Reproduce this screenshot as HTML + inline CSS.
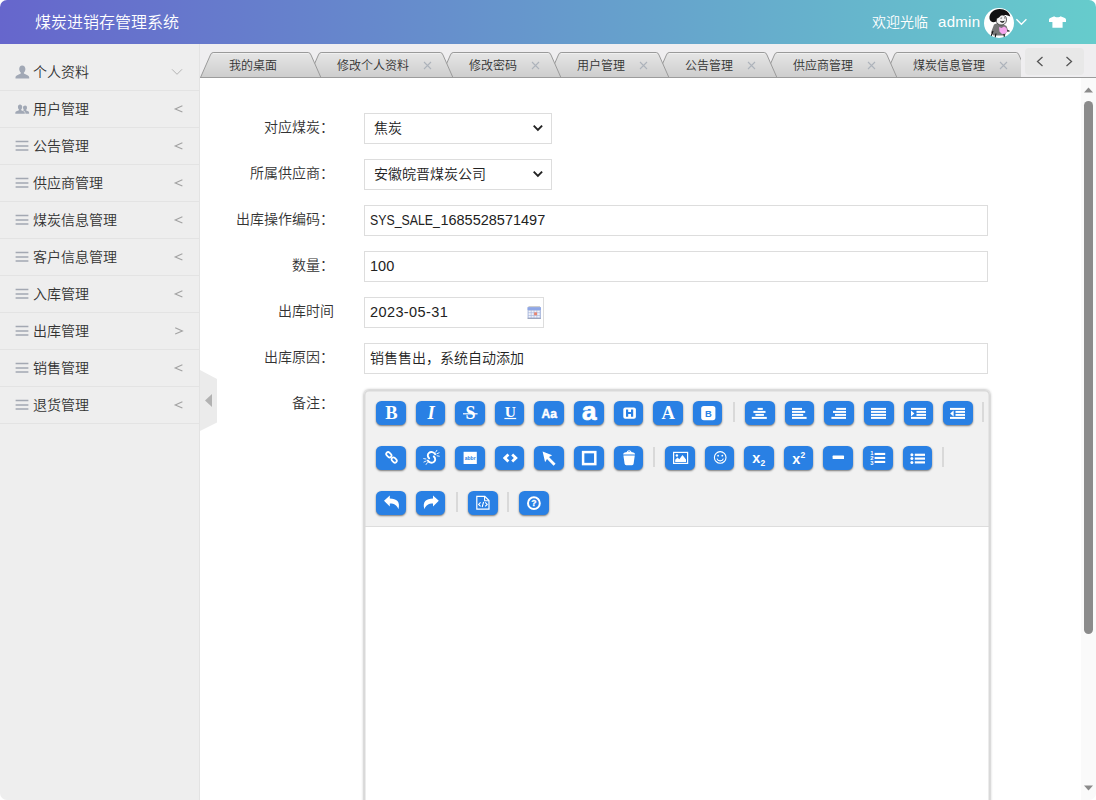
<!DOCTYPE html>
<html lang="zh-CN">
<head>
<meta charset="utf-8">
<title>煤炭进销存管理系统</title>
<style>
*{box-sizing:border-box;margin:0;padding:0}
html,body{width:1096px;height:800px;overflow:hidden;background:#fff}
body{font-family:"Liberation Sans","Noto Sans CJK SC",sans-serif;font-size:14px;font-weight:350;color:#333;position:relative}
#win{position:absolute;left:0;top:0;width:1096px;height:800px;border-radius:7px;overflow:hidden;background:#fff}
/* header */
#hd{position:absolute;left:0;top:0;width:1096px;height:44px;background:linear-gradient(90deg,#6666cc 0%,#66cccc 100%)}
#hd .logo{position:absolute;left:35px;top:1px;line-height:44px;font-size:16px;color:#fff}
#hd .wel{position:absolute;left:872px;top:0;line-height:44px;font-size:14px;color:#fff}
#hd .adm{position:absolute;left:938px;top:1px;line-height:42px;letter-spacing:.3px;font-size:15px;color:#fff}
#hd svg{position:absolute}
/* aside */
#as{position:absolute;left:0;top:44px;width:200px;height:756px;background:#eeeeee;border-right:1px solid #e3e3e3;padding-top:10px}
#as .it{position:relative;height:37px;border-bottom:1px solid #e3e3e3;line-height:37px;padding-left:33px;font-size:14px;color:#333}
#as .it .ic{position:absolute;left:15px;top:10px;width:15px;height:15px;line-height:0}
#as .it svg.ar{position:absolute;left:172px;top:13px}
#hdl{position:absolute;left:200px;top:370px}
/* tabs */
#tb{position:absolute;left:200px;top:44px;width:896px;height:34px;background:#efeef0}
#tb .line{position:absolute;left:0;top:33px;width:896px;height:1px;background:#9c9c9c}
#tb svg.tabs{position:absolute;left:0;top:0}
#tb .t{position:absolute;top:14px;font-size:12px;line-height:16px;color:#333;white-space:nowrap}
#tb svg.x{position:absolute;top:17px}
#tb .more{position:absolute;left:825px;top:4px;width:59px;height:27px;background:#e8e8e8;border-radius:4px}
#tb .more svg{position:absolute;top:8px}
/* main */
#mn{position:absolute;left:200px;top:78px;width:896px;height:722px;background:#fff;overflow:hidden}
.lb{position:absolute;right:762px;font-size:14px;line-height:20px;color:#333;white-space:nowrap;text-align:right}
.ip{position:absolute;left:164px;height:31px;border:1px solid #ddd;background:#fff;font-size:14px;line-height:29px;padding-left:5px;color:#222;white-space:nowrap}
.sel{padding-left:9px}
.en{font-size:14.5px}
.cw{display:inline-block;width:70.4px;height:20px;vertical-align:top}
.cx{display:inline-block;transform:scaleX(.85);transform-origin:0 50%}
/* editor */
#ed{position:absolute;left:164px;top:312px;width:626px;height:440px;border-radius:5px 5px 0 0;box-shadow:0 0 3px #999;background:#fff}
#ed .bar{position:absolute;left:0;top:0;width:626px;height:137px;background:#f1f1f1;border-bottom:1px solid #ddd;border-radius:5px 5px 0 0}
.bt{position:absolute;width:29.6px;height:24px;background:#2980e4;border-radius:5.500px;box-shadow:0 1px 2px rgba(0,0,0,.5);overflow:hidden}
.bt svg{position:absolute;left:0;top:0}
.sp{position:absolute;width:2px;height:20px;background:#d9d9d9}
#ed .ov{position:absolute;left:0;top:0;width:626px;height:440px;border-radius:5px 5px 0 0;box-shadow:inset 0 0 0 1.5px #d9d9d9;pointer-events:none}
/* scrollbar */
#sb{position:absolute;left:1081px;top:78px;width:15px;height:722px;background:#fafafa}
#sb .th{position:absolute;left:3px;top:22.700px;width:9px;height:533px;border-radius:4.500px;background:#8b8b8b}
#sb svg{position:absolute;left:3px}
</style>
</head>
<body>
<div id="win">
<div id="hd">
  <div class="logo">煤炭进销存管理系统</div>
  <div class="wel">欢迎光临</div>
  <div class="adm">admin</div>
  <svg style="left:984px;top:8px" width="30" height="30" viewBox="0 0 30 30"><defs><clipPath id="ac"><circle cx="15" cy="15" r="15"/></clipPath></defs><circle cx="15" cy="15" r="15" fill="#fff"/><g clip-path="url(#ac)">
<path d="M10 16.500l3.500-1.500 5 1 4 2 2 5.500-2.500 1-1 3H9.500L7 24.500z" fill="#777"/>
<path d="M15 19l2.500 1 2.500-1.500 2.500 1.500.8 3.500-2.300 2.300-3 .2-2.500-2.500z" fill="#f5a6ee"/>
<path d="M12 8.500c2.500-2 8-2 10 .5 1 2.500.5 5.500-1.500 7-2 1.300-5 1.300-6.500 0-2-1.800-3-5-2-7.500z" fill="#f2f2f2" stroke="#222" stroke-width=".7"/>
<path d="M5.500 10.500C5 5 10 1 15.500 1c5.500 0 10 3 10.800 7.500-2.300-1.500-6.300-2-9.300-1.200-1.200 1.800-2.700 2.900-4.300 3.400.4 1.500-.2 2.800-1.700 3.300-2.500.6-5.300-.8-5.500-3.500z" fill="#111"/>
<path d="M16 12.800c1.500.7 3.700.5 4.700-.4-.3 1.500-1.300 2.300-2.500 2.300s-2.200-.8-2.200-1.900z" fill="#222"/>
<path d="M16.500 10.300l1.600-.4M20 9.800l1.400.3" stroke="#222" stroke-width=".7" fill="none"/>
<path d="M9 23l-2 5.500M12 25.500l-1 4.500M20 26l.5 4M23.500 22.500l2 .8" stroke="#111" stroke-width="1.100" fill="none"/>
</g></svg>
  <svg style="left:1015px;top:17px" width="13" height="10" viewBox="0 0 13 10"><path d="M1.400 2.300l5 5 5-5" stroke="#fff" stroke-width="1.300" fill="none"/></svg>
  <svg style="left:1048px;top:15px" width="19" height="14" viewBox="0 0 19 14"><path d="M6.300 1.300c.8 1.300 5.400 1.300 6.200 0l4.300 1.600c.6.200 1.200 1 1.200 1.600v2.500h-3.400v5.800H4.400V7H1V4.500c0-.6.600-1.400 1.200-1.600z" fill="#fff"/></svg>
</div>
<div id="as">
<div class="it"><span class="ic"><svg width="15" height="15" viewBox="0 0 15 15"><path d="M7.2 1.4c2 0 3.2 1.5 3.2 3.6 0 1.5-.6 2.9-1.5 3.6v1l3.6 1.6c1.2.5 1.7 1.300 1.700 2.300v1.100H.5v-1.100c0-1 .5-1.800 1.700-2.300l3.600-1.600v-1C4.900 7.900 4.200 6.500 4.200 5c0-2.100 1.100-3.600 3-3.600z" fill="#a1a8b5"/></svg></span>个人资料<svg class="ar" style="left:170px" width="14" height="12" viewBox="0 0 14 12"><path d="M2 2.300l5 5 5-5" stroke="#b4b4b4" stroke-width="1" fill="none"/></svg></div>
<div class="it"><span class="ic"><svg width="15" height="15" viewBox="0 0 15 15"><path d="M5 3.400c1.400 0 2.200 1.100 2.200 2.600 0 1.100-.4 2-1 2.600v.7l2.400 1c.9.400 1.200.9 1.200 1.700v.7H.3v-.7c0-.8.300-1.300 1.200-1.700l2.400-1v-.7c-.6-.6-1-1.500-1-2.600 0-1.500.8-2.600 2.100-2.600z" fill="#a1a8b5"/><path d="M10.200 4.600c1.100 0 1.800.9 1.800 2.100 0 .9-.3 1.600-.8 2.100v.6l1.900.8c.7.300 1 .7 1 1.400v1.100h-3.700v-.7c0-1-.5-1.700-1.500-2.100l-.9-.4c.4-.1.700-.3.700-.3v-.5c-.4-.5-.7-1.200-.7-2 0-1.200.9-2.100 2.200-2.100z" fill="#a1a8b5"/></svg></span>用户管理<svg class="ar" width="12" height="12" viewBox="0 0 12 12"><path d="M10.400 1.800L3.200 4.900l7.200 3.100" stroke="#a2a2a2" stroke-width="1.100" fill="none"/></svg></div>
<div class="it"><span class="ic"><svg width="15" height="15" viewBox="0 0 15 15"><path d="M.6 3.600h12.800M.6 7.900h12.800M.6 12.100h12.800" stroke="#a3a8b2" stroke-width="1.500" fill="none"/></svg></span>公告管理<svg class="ar" width="12" height="12" viewBox="0 0 12 12"><path d="M10.400 1.800L3.200 4.900l7.200 3.100" stroke="#a2a2a2" stroke-width="1.100" fill="none"/></svg></div>
<div class="it"><span class="ic"><svg width="15" height="15" viewBox="0 0 15 15"><path d="M.6 3.600h12.800M.6 7.900h12.800M.6 12.100h12.800" stroke="#a3a8b2" stroke-width="1.500" fill="none"/></svg></span>供应商管理<svg class="ar" width="12" height="12" viewBox="0 0 12 12"><path d="M10.400 1.800L3.200 4.900l7.200 3.100" stroke="#a2a2a2" stroke-width="1.100" fill="none"/></svg></div>
<div class="it"><span class="ic"><svg width="15" height="15" viewBox="0 0 15 15"><path d="M.6 3.600h12.800M.6 7.900h12.800M.6 12.100h12.800" stroke="#a3a8b2" stroke-width="1.500" fill="none"/></svg></span>煤炭信息管理<svg class="ar" width="12" height="12" viewBox="0 0 12 12"><path d="M10.400 1.800L3.200 4.900l7.200 3.100" stroke="#a2a2a2" stroke-width="1.100" fill="none"/></svg></div>
<div class="it"><span class="ic"><svg width="15" height="15" viewBox="0 0 15 15"><path d="M.6 3.600h12.800M.6 7.900h12.800M.6 12.100h12.800" stroke="#a3a8b2" stroke-width="1.500" fill="none"/></svg></span>客户信息管理<svg class="ar" width="12" height="12" viewBox="0 0 12 12"><path d="M10.400 1.800L3.200 4.900l7.200 3.100" stroke="#a2a2a2" stroke-width="1.100" fill="none"/></svg></div>
<div class="it"><span class="ic"><svg width="15" height="15" viewBox="0 0 15 15"><path d="M.6 3.600h12.800M.6 7.900h12.800M.6 12.100h12.800" stroke="#a3a8b2" stroke-width="1.500" fill="none"/></svg></span>入库管理<svg class="ar" width="12" height="12" viewBox="0 0 12 12"><path d="M10.400 1.800L3.200 4.900l7.200 3.100" stroke="#a2a2a2" stroke-width="1.100" fill="none"/></svg></div>
<div class="it"><span class="ic"><svg width="15" height="15" viewBox="0 0 15 15"><path d="M.6 3.600h12.800M.6 7.900h12.800M.6 12.100h12.800" stroke="#a3a8b2" stroke-width="1.500" fill="none"/></svg></span>出库管理<svg class="ar" width="12" height="12" viewBox="0 0 12 12"><path d="M3.200 1.800l7.200 3.100-7.200 3.100" stroke="#a2a2a2" stroke-width="1.100" fill="none"/></svg></div>
<div class="it"><span class="ic"><svg width="15" height="15" viewBox="0 0 15 15"><path d="M.6 3.600h12.800M.6 7.900h12.800M.6 12.100h12.800" stroke="#a3a8b2" stroke-width="1.500" fill="none"/></svg></span>销售管理<svg class="ar" width="12" height="12" viewBox="0 0 12 12"><path d="M10.400 1.800L3.200 4.900l7.200 3.100" stroke="#a2a2a2" stroke-width="1.100" fill="none"/></svg></div>
<div class="it"><span class="ic"><svg width="15" height="15" viewBox="0 0 15 15"><path d="M.6 3.600h12.800M.6 7.900h12.800M.6 12.100h12.800" stroke="#a3a8b2" stroke-width="1.500" fill="none"/></svg></span>退货管理<svg class="ar" width="12" height="12" viewBox="0 0 12 12"><path d="M10.400 1.800L3.200 4.900l7.200 3.100" stroke="#a2a2a2" stroke-width="1.100" fill="none"/></svg></div>

</div>
<div id="tb">
  <svg class="tabs" width="821" height="34" viewBox="0 0 821 34"><defs><linearGradient id="tg" x1="0" y1="0" x2="0" y2="1"><stop offset="0" stop-color="#e6e6e6"/><stop offset="1" stop-color="#cdcdcd"/></linearGradient></defs><path d="M684.5 33.5 L694.4 11 Q695.3 8.5 697.1 8.5 L816.3 8.5 Q818.1 8.5 819.0 11 L828.9 33.5" fill="url(#tg)" stroke="#9a9a9a" stroke-width="1"/><path d="M697.0 9.500H816.4" stroke="#f0f0f0" stroke-width="1" fill="none"/><path d="M564.5 33.5 L574.4 11 Q575.3 8.5 577.1 8.5 L684.3 8.5 Q686.1 8.5 687.0 11 L696.9 33.5" fill="url(#tg)" stroke="#9a9a9a" stroke-width="1"/><path d="M577.0 9.500H684.4" stroke="#f0f0f0" stroke-width="1" fill="none"/><path d="M456.5 33.5 L466.4 11 Q467.3 8.5 469.1 8.5 L564.3 8.5 Q566.1 8.5 567.0 11 L576.9 33.5" fill="url(#tg)" stroke="#9a9a9a" stroke-width="1"/><path d="M469.0 9.500H564.4" stroke="#f0f0f0" stroke-width="1" fill="none"/><path d="M348.5 33.5 L358.4 11 Q359.3 8.5 361.1 8.5 L456.3 8.5 Q458.1 8.5 459.0 11 L468.9 33.5" fill="url(#tg)" stroke="#9a9a9a" stroke-width="1"/><path d="M361.0 9.500H456.4" stroke="#f0f0f0" stroke-width="1" fill="none"/><path d="M240.5 33.5 L250.4 11 Q251.3 8.5 253.1 8.5 L348.3 8.5 Q350.1 8.5 351.0 11 L360.9 33.5" fill="url(#tg)" stroke="#9a9a9a" stroke-width="1"/><path d="M253.0 9.500H348.4" stroke="#f0f0f0" stroke-width="1" fill="none"/><path d="M108.5 33.5 L118.4 11 Q119.3 8.5 121.1 8.5 L240.3 8.5 Q242.1 8.5 243.0 11 L252.9 33.5" fill="url(#tg)" stroke="#9a9a9a" stroke-width="1"/><path d="M121.0 9.500H240.4" stroke="#f0f0f0" stroke-width="1" fill="none"/><path d="M0.5 33.5 L10.4 11 Q11.3 8.5 13.1 8.5 L108.3 8.5 Q110.1 8.5 111.0 11 L120.9 33.5" fill="url(#tg)" stroke="#9a9a9a" stroke-width="1"/><path d="M13.0 9.500H108.4" stroke="#f0f0f0" stroke-width="1" fill="none"/></svg>
  <div class="line"></div>
  <div class="t" style="left:29.0px">我的桌面</div>
<div class="t" style="left:137.0px">修改个人资料</div><svg class="x" style="left:222.5px" width="9" height="9" viewBox="0 0 9 9"><path d="M1 1l7 7M8 1l-7 7" stroke="#adb3bb" stroke-width="1.100" fill="none"/></svg>
<div class="t" style="left:269.0px">修改密码</div><svg class="x" style="left:330.5px" width="9" height="9" viewBox="0 0 9 9"><path d="M1 1l7 7M8 1l-7 7" stroke="#adb3bb" stroke-width="1.100" fill="none"/></svg>
<div class="t" style="left:377.0px">用户管理</div><svg class="x" style="left:438.5px" width="9" height="9" viewBox="0 0 9 9"><path d="M1 1l7 7M8 1l-7 7" stroke="#adb3bb" stroke-width="1.100" fill="none"/></svg>
<div class="t" style="left:485.0px">公告管理</div><svg class="x" style="left:546.5px" width="9" height="9" viewBox="0 0 9 9"><path d="M1 1l7 7M8 1l-7 7" stroke="#adb3bb" stroke-width="1.100" fill="none"/></svg>
<div class="t" style="left:593.0px">供应商管理</div><svg class="x" style="left:666.5px" width="9" height="9" viewBox="0 0 9 9"><path d="M1 1l7 7M8 1l-7 7" stroke="#adb3bb" stroke-width="1.100" fill="none"/></svg>
<div class="t" style="left:713.0px">煤炭信息管理</div><svg class="x" style="left:798.5px" width="9" height="9" viewBox="0 0 9 9"><path d="M1 1l7 7M8 1l-7 7" stroke="#adb3bb" stroke-width="1.100" fill="none"/></svg>

  <div class="more"><svg style="left:11px" width="8" height="11" viewBox="0 0 8 11"><path d="M6.500 1L1.500 5.500l5 4.500" stroke="#555" stroke-width="1.300" fill="none"/></svg><svg style="left:40px" width="8" height="11" viewBox="0 0 8 11"><path d="M1.500 1l5 4.500-5 4.500" stroke="#555" stroke-width="1.300" fill="none"/></svg></div>
</div>
<div id="mn">
  <div class="lb" style="top:39px">对应煤炭：</div>
  <div class="lb" style="top:85px">所属供应商：</div>
  <div class="lb" style="top:131px">出库操作编码：</div>
  <div class="lb" style="top:177px">数量：</div>
  <div class="lb" style="top:223px">出库时间</div>
  <div class="lb" style="top:269px">出库原因：</div>
  <div class="lb" style="top:315px">备注：</div>
  <div class="ip sel" style="top:35px;width:188px">焦炭<svg style="position:absolute;left:166.500px;top:10.100px" width="12" height="8" viewBox="0 0 12 8"><path d="M1.700 1.600l4.200 4.200 4.200-4.200" stroke="#222" stroke-width="1.900" fill="none"/></svg></div>
  <div class="ip sel" style="top:81px;width:188px">安徽皖晋煤炭公司<svg style="position:absolute;left:166.500px;top:10.100px" width="12" height="8" viewBox="0 0 12 8"><path d="M1.700 1.600l4.200 4.200 4.200-4.200" stroke="#222" stroke-width="1.900" fill="none"/></svg></div>
  <div class="ip en" style="top:127px;width:624px"><span class="cw"><span class="cx">SYS_SALE_</span></span>1685528571497</div>
  <div class="ip en" style="top:173px;width:624px">100</div>
  <div class="ip en" style="top:219px;width:180px;letter-spacing:.4px">2023-05-31<svg style="position:absolute;left:162px;top:8px" width="14.500" height="13.500" viewBox="0 0 15 14"><rect x="1.500" y=".3" width="12" height="1.400" fill="#b9b9b9"/><rect x=".6" y="1.300" width="13.800" height="11.800" fill="#a9b8dd"/><rect x=".6" y="1.300" width="13.800" height="2.800" fill="#8ea6e6"/><rect x=".6" y="12.300" width="13.800" height=".9" fill="#8d97ad"/>
<g fill="#f1f3fa"><rect x="1.600" y="4.800" width="2.300" height="1.900"/><rect x="4.600" y="4.800" width="2.300" height="1.900"/><rect x="7.600" y="4.800" width="2.300" height="1.900"/><rect x="10.600" y="4.800" width="2.600" height="1.900"/><rect x="1.600" y="7.400" width="2.300" height="1.900"/><rect x="4.600" y="7.400" width="2.300" height="1.900"/><rect x="10.600" y="7.400" width="2.600" height="1.900"/><rect x="1.600" y="10" width="2.300" height="1.900"/><rect x="4.600" y="10" width="2.300" height="1.900"/><rect x="7.600" y="10" width="2.300" height="1.900"/><rect x="10.600" y="10" width="2.600" height="1.900"/></g><rect x="7.400" y="6.600" width="3" height="3" fill="#e98670"/></svg></div>
  <div class="ip" style="top:265px;width:624px">销售售出，系统自动添加</div>
  <div id="ed"><div class="bar"></div>
<div class="bt" style="left:12.0px;top:11.0px"><svg width="30" height="24" viewBox="0 0 30 24"><text x="15.3" y="18.1" text-anchor="middle" font-family="Liberation Serif,serif" font-weight="bold" font-size="18.5" fill="#fff">B</text></svg></div>
<div class="bt" style="left:51.6px;top:11.0px"><svg width="30" height="24" viewBox="0 0 30 24"><text x="15.2" y="18.1" text-anchor="middle" font-family="Liberation Serif,serif" font-weight="bold" font-style="italic" font-size="18.5" fill="#fff">I</text></svg></div>
<div class="bt" style="left:91.2px;top:11.0px"><svg width="30" height="24" viewBox="0 0 30 24"><text x="15.4" y="18.1" text-anchor="middle" font-family="Liberation Serif,serif" font-weight="bold" font-size="18" fill="#fff">S</text><rect x="8" y="12.2" width="14.6" height="1.2" fill="#fff"/></svg></div>
<div class="bt" style="left:130.8px;top:11.0px"><svg width="30" height="24" viewBox="0 0 30 24"><text x="15.3" y="15.5" text-anchor="middle" font-family="Liberation Serif,serif" font-weight="bold" font-size="15.5" fill="#fff">U</text><rect x="9.4" y="16.9" width="11.8" height="1.2" fill="#fff"/></svg></div>
<div class="bt" style="left:170.4px;top:11.0px"><svg width="30" height="24" viewBox="0 0 30 24"><text x="15.2" y="16.8" text-anchor="middle" font-family="Liberation Sans,sans-serif" font-weight="bold" font-size="13.5" textLength="15.4" lengthAdjust="spacingAndGlyphs" fill="#fff" stroke="#fff" stroke-width=".5">Aa</text></svg></div>
<div class="bt" style="left:210.0px;top:11.0px"><svg width="30" height="24" viewBox="0 0 30 24"><text x="15.3" y="18.6" text-anchor="middle" font-family="Liberation Sans,sans-serif" font-weight="bold" font-size="26" fill="#fff" stroke="#fff" stroke-width=".7">a</text></svg></div>
<div class="bt" style="left:249.6px;top:11.0px"><svg width="30" height="24" viewBox="0 0 30 24"><rect x="9.3" y="6.4" width="12.6" height="11.4" rx="2" fill="#fff"/><path d="M12 8.400h2.200v2.600h2.800V8.400h2.200v7.400h-2.200v-2.800h-2.800v2.800H12z" fill="#2980e4"/></svg></div>
<div class="bt" style="left:289.2px;top:11.0px"><svg width="30" height="24" viewBox="0 0 30 24"><text x="15.3" y="18.1" text-anchor="middle" font-family="Liberation Serif,serif" font-weight="bold" font-size="18.5" fill="#fff">A</text></svg></div>
<div class="bt" style="left:328.8px;top:11.0px"><svg width="30" height="24" viewBox="0 0 30 24"><rect x="8.2" y="4.9" width="14.2" height="14.3" rx="2.6" fill="#fff"/><text x="15.4" y="15.7" text-anchor="middle" font-family="Liberation Sans,sans-serif" font-weight="bold" font-size="9.400" fill="#2980e4">B</text></svg></div>
<div class="sp" style="left:368.8px;top:12.3px"></div>
<div class="bt" style="left:381.2px;top:11.0px"><svg width="30" height="24" viewBox="0 0 30 24"><rect x="12.6" y="6.9" width="5.2" height="2" fill="#fff"/><rect x="8.4" y="9.9" width="12.1" height="2" fill="#fff"/><rect x="10.4" y="12.9" width="8.5" height="2" fill="#fff"/><rect x="6.8" y="15.9" width="15.0" height="2" fill="#fff"/></svg></div>
<div class="bt" style="left:420.8px;top:11.0px"><svg width="30" height="24" viewBox="0 0 30 24"><rect x="7.0" y="6.9" width="10.0" height="2" fill="#fff"/><rect x="7.0" y="9.9" width="13.2" height="2" fill="#fff"/><rect x="7.0" y="12.9" width="11.2" height="2" fill="#fff"/><rect x="7.0" y="15.9" width="14.6" height="2" fill="#fff"/></svg></div>
<div class="bt" style="left:460.4px;top:11.0px"><svg width="30" height="24" viewBox="0 0 30 24"><rect x="12.2" y="6.9" width="9.8" height="2" fill="#fff"/><rect x="9.0" y="9.9" width="13.0" height="2" fill="#fff"/><rect x="11.0" y="12.9" width="11.0" height="2" fill="#fff"/><rect x="7.4" y="15.9" width="14.6" height="2" fill="#fff"/></svg></div>
<div class="bt" style="left:500.0px;top:11.0px"><svg width="30" height="24" viewBox="0 0 30 24"><rect x="7.0" y="6.9" width="15.0" height="2" fill="#fff"/><rect x="7.0" y="9.9" width="15.0" height="2" fill="#fff"/><rect x="7.0" y="12.9" width="15.0" height="2" fill="#fff"/><rect x="7.0" y="15.9" width="15.0" height="2" fill="#fff"/></svg></div>
<div class="bt" style="left:539.6px;top:11.0px"><svg width="30" height="24" viewBox="0 0 30 24"><rect x="7.0" y="6.9" width="15.0" height="2" fill="#fff"/><rect x="12.5" y="9.9" width="9.5" height="2" fill="#fff"/><rect x="12.5" y="12.9" width="9.5" height="2" fill="#fff"/><rect x="7.0" y="15.9" width="15.0" height="2" fill="#fff"/><path d="M7 9.6l3.4 2.9L7 15.4z" fill="#fff"/></svg></div>
<div class="bt" style="left:579.2px;top:11.0px"><svg width="30" height="24" viewBox="0 0 30 24"><rect x="7.0" y="6.9" width="15.0" height="2" fill="#fff"/><rect x="12.5" y="9.9" width="9.5" height="2" fill="#fff"/><rect x="12.5" y="12.9" width="9.5" height="2" fill="#fff"/><rect x="7.0" y="15.9" width="15.0" height="2" fill="#fff"/><path d="M10.6 9.6L7.2 12.5l3.4 2.9z" fill="#fff"/></svg></div>
<div class="sp" style="left:618.0px;top:12.3px"></div>
<div class="bt" style="left:12.0px;top:56.0px"><svg width="30" height="24" viewBox="0 0 30 24"><g fill="none" stroke="#fff" stroke-width="1.7" transform="translate(15.5 11.4) rotate(45)"><rect x="-6.7" y="-1.9" width="5.9" height="3.8" rx="1.9"/><rect x="0.8" y="-1.9" width="5.9" height="3.8" rx="1.9"/></g></svg></div>
<div class="bt" style="left:51.6px;top:56.0px"><svg width="30" height="24" viewBox="0 0 30 24"><g fill="none" stroke="#fff" stroke-width="1.900" stroke-linecap="round"><path d="M19.200 8.200c-1.300-2.200-4.400-2.900-6.200-1.300s-1.500 3.700.2 5.400"/><path d="M11.800 14.600c1.300 2.200 4.400 2.900 6.200 1.300s1.500-3.700-.2-5.400"/></g><g stroke="#fff" stroke-width=".9" stroke-linecap="round"><path d="M19.600 6.200l1.300-1.900M20.800 7.800l2.300-1M21 9.800l2.300.4M11.400 16.600l-1.300 1.900M10.200 15l-2.300 1M10 13l-2.300-.4"/></g></svg></div>
<div class="bt" style="left:91.2px;top:56.0px"><svg width="30" height="24" viewBox="0 0 30 24"><rect x="8.6" y="5.8" width="13.2" height="12.2" fill="#fff"/><text x="15.2" y="14" text-anchor="middle" font-family="Liberation Sans,sans-serif" font-weight="bold" font-size="5" fill="#2980e4">abbr</text></svg></div>
<div class="bt" style="left:130.8px;top:56.0px"><svg width="30" height="24" viewBox="0 0 30 24"><g fill="none" stroke="#fff" stroke-width="2.8" stroke-linejoin="miter"><path d="M13.4 8.6l-3.6 3.4 3.6 3.4"/><path d="M17.2 8.6l3.6 3.4-3.6 3.4"/></g></svg></div>
<div class="bt" style="left:170.4px;top:56.0px"><svg width="30" height="24" viewBox="0 0 30 24"><path d="M8.6 5.6l9.6 3.6-3.2 1.9 6.6 6.6-2 2-6.6-6.6-1.9 3.2z" fill="#fff"/></svg></div>
<div class="bt" style="left:210.0px;top:56.0px"><svg width="30" height="24" viewBox="0 0 30 24"><rect x="9.1" y="6.1" width="12.2" height="12" fill="none" stroke="#fff" stroke-width="2.5"/></svg></div>
<div class="bt" style="left:249.6px;top:56.0px"><svg width="30" height="24" viewBox="0 0 30 24"><path d="M9.4 9.6h11.4l-1.2 8.2a1.6 1.6 0 0 1-1.6 1.4h-5.8a1.6 1.6 0 0 1-1.6-1.4z" fill="#fff"/><path d="M9.2 8.4c0-1.6 2.6-2.6 5.9-2.6s5.9 1 5.9 2.6z" fill="#fff"/><path d="M13.2 6.2a2 2 0 0 1 3.8 0" fill="none" stroke="#fff" stroke-width="1.1"/></svg></div>
<div class="sp" style="left:289.2px;top:57.3px"></div>
<div class="bt" style="left:301.0px;top:56.0px"><svg width="30" height="24" viewBox="0 0 30 24"><rect x="8.6" y="6.4" width="14" height="11" fill="none" stroke="#fff" stroke-width="1.2"/><path d="M10.2 16v-2.2l2.3-2.4 1.8 1.8 3.2-4.2 3.5 4.6V16z" fill="#fff"/><circle cx="11.9" cy="9.5" r="1.2" fill="#fff"/></svg></div>
<div class="bt" style="left:340.6px;top:56.0px"><svg width="30" height="24" viewBox="0 0 30 24"><circle cx="15.2" cy="11.4" r="5.8" fill="none" stroke="#fff" stroke-width="1.1"/><circle cx="13.1" cy="9.7" r="0.9" fill="#fff"/><circle cx="17.3" cy="9.7" r="0.9" fill="#fff"/><path d="M12 12.6a3.4 3.4 0 0 0 6.4 0" fill="none" stroke="#fff" stroke-width="1.1"/></svg></div>
<div class="bt" style="left:380.2px;top:56.0px"><svg width="30" height="24" viewBox="0 0 30 24"><text x="8.300" y="17.200" font-family="Liberation Sans,sans-serif" font-weight="bold" font-size="14.500" fill="#fff">x</text><text x="16.600" y="19.500" font-family="Liberation Sans,sans-serif" font-weight="bold" font-size="8.500" fill="#fff">2</text></svg></div>
<div class="bt" style="left:419.8px;top:56.0px"><svg width="30" height="24" viewBox="0 0 30 24"><text x="8.300" y="17.800" font-family="Liberation Sans,sans-serif" font-weight="bold" font-size="14.500" fill="#fff">x</text><text x="16.600" y="12.200" font-family="Liberation Sans,sans-serif" font-weight="bold" font-size="8.500" fill="#fff">2</text></svg></div>
<div class="bt" style="left:459.4px;top:56.0px"><svg width="30" height="24" viewBox="0 0 30 24"><rect x="9.6" y="9.6" width="11.4" height="3.4" rx="0.6" fill="#fff"/></svg></div>
<div class="bt" style="left:499.0px;top:56.0px"><svg width="30" height="24" viewBox="0 0 30 24"><rect x="11.6" y="6.9" width="10.6" height="2.1" fill="#fff"/><rect x="11.6" y="10.9" width="10.6" height="2.1" fill="#fff"/><rect x="11.6" y="14.9" width="10.6" height="2.1" fill="#fff"/><text x="7.3" y="9.4" font-family="Liberation Sans,sans-serif" font-weight="bold" font-size="5.800" fill="#fff">1</text><text x="7.3" y="14.1" font-family="Liberation Sans,sans-serif" font-weight="bold" font-size="5.800" fill="#fff">2</text><text x="7.3" y="18.8" font-family="Liberation Sans,sans-serif" font-weight="bold" font-size="5.800" fill="#fff">3</text></svg></div>
<div class="bt" style="left:538.6px;top:56.0px"><svg width="30" height="24" viewBox="0 0 30 24"><rect x="11.8" y="7.7" width="10.2" height="2.2" fill="#fff"/><circle cx="8.9" cy="8.8" r="1.5" fill="#fff"/><rect x="11.8" y="11.5" width="10.2" height="2.2" fill="#fff"/><circle cx="8.9" cy="12.6" r="1.5" fill="#fff"/><rect x="11.8" y="15.3" width="10.2" height="2.2" fill="#fff"/><circle cx="8.9" cy="16.4" r="1.5" fill="#fff"/></svg></div>
<div class="sp" style="left:578.4px;top:57.3px"></div>
<div class="bt" style="left:12.0px;top:101.0px"><svg width="30" height="24" viewBox="0 0 30 24"><path d="M8 9.800L13.800 4.600V7.600C20.600 7.600 24.600 11 22.400 18.200C21 14.600 18.600 12.600 13.800 12.600V15.400Z" fill="#fff"/></svg></div>
<div class="bt" style="left:51.6px;top:101.0px"><svg width="30" height="24" viewBox="0 0 30 24"><path d="M22.800 9.800L17 4.600V7.600C10.200 7.600 6.200 11 8.400 18.200C9.800 14.600 12.200 12.600 17 12.600V15.400Z" fill="#fff"/></svg></div>
<div class="sp" style="left:91.6px;top:102.3px"></div>
<div class="bt" style="left:104.0px;top:101.0px"><svg width="30" height="24" viewBox="0 0 30 24"><path d="M8.8 5.4h8l4.2 4.2v8.6H8.8z" fill="none" stroke="#fff" stroke-width="1.2"/><path d="M16.6 5.6v4.2h4.2" fill="none" stroke="#fff" stroke-width="1.1"/><path d="M12.6 11.4l-2 2 2 2M17.2 11.4l2 2-2 2M15.6 10.8l-1.4 5.2" fill="none" stroke="#fff" stroke-width="1.100"/></svg></div>
<div class="sp" style="left:143.0px;top:102.3px"></div>
<div class="bt" style="left:155.2px;top:101.0px"><svg width="30" height="24" viewBox="0 0 30 24"><circle cx="14.900" cy="12.200" r="5.900" fill="none" stroke="#fff" stroke-width="2"/><text x="14.900" y="15.200" text-anchor="middle" font-family="Liberation Sans,sans-serif" font-weight="bold" font-size="8.500" fill="#fff" stroke="#fff" stroke-width=".3">?</text></svg></div>

<div class="ov"></div>
  </div>
</div>
<svg id="hdl" width="18" height="62" viewBox="0 0 18 62"><path d="M0 0L17 9v43.500L0 61z" fill="#ebebeb"/><path d="M12 24v13L5 30.500z" fill="#b2b2b2"/></svg>
<div id="sb"><svg style="top:9px" width="9" height="6" viewBox="0 0 9 6"><path d="M0 5.500L4.500.4 9 5.500z" fill="#8b8b8b"/></svg><div class="th"></div><svg style="top:706.500px" width="9" height="6" viewBox="0 0 9 6"><path d="M0 .5L4.500 5.600 9 .5z" fill="#8b8b8b"/></svg></div>
</div>
</body>
</html>
